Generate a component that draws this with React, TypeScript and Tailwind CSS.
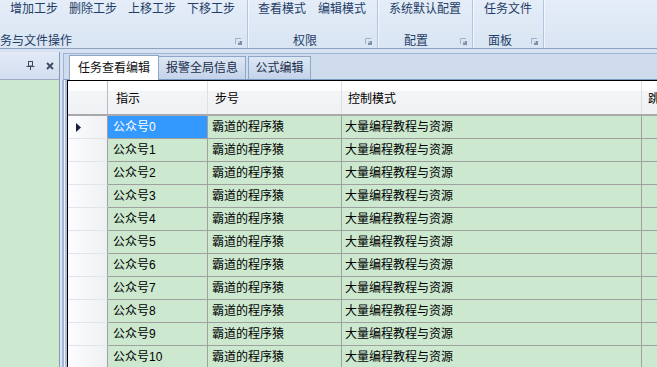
import React from "react";

const Launcher = () => (
  <svg width="7" height="7" viewBox="0 0 7 7" className="shrink-0 block">
    <path d="M0.5 6V0.5H6" fill="none" stroke="#9fb0c8" strokeWidth="1" />
    <rect x="3" y="3" width="4" height="4" fill="#7f90aa" />
    <rect x="3" y="3" width="2" height="2" fill="#b9c6d8" />
  </svg>
);

const Pin = () => (
  <svg width="9" height="9" viewBox="0 0 9 9" className="block">
    <rect x="2.5" y="0.5" width="4" height="4.5" fill="none" stroke="#3a4a60" />
    <path d="M0.5 5.5H8.5" stroke="#3a4a60" />
    <path d="M4.5 5.5V9" stroke="#3a4a60" />
  </svg>
);

const CloseX = () => (
  <svg width="8" height="8" viewBox="0 0 8 8" className="block">
    <path d="M1 1L7 7M7 1L1 7" stroke="#3a4a60" strokeWidth="1.8" />
  </svg>
);

const Arrow = () => (
  <svg width="6" height="9" viewBox="0 0 6 9" className="block">
    <polygon points="0,0 5,4.5 0,9" fill="#1c1c3c" />
  </svg>
);

export default function App() {
  const rows = Array.from({ length: 11 }, (_, i) => i);
  return (
    <div className="w-[657px] h-[367px] overflow-hidden flex flex-col bg-[#d6e2f1] font-['Liberation_Sans','Noto_Sans_CJK_SC',sans-serif] text-[12px]">
      {/* Ribbon */}
      <div className="flex h-[49px] shrink-0 border-b border-[#8da2bf] bg-gradient-to-b from-[#e4edf8] to-[#d9e5f3] leading-[14px] text-[#1f3d66]">
        <div className="w-[248px] h-[48px] flex flex-col border-r border-[#b3c5dc] overflow-hidden">
          <div className="flex pt-[2px] pl-[10px] gap-[11px] whitespace-nowrap">
            <span>增加工步</span>
            <span>删除工步</span>
            <span>上移工步</span>
            <span>下移工步</span>
          </div>
          <div className="mt-auto h-[14px] flex items-center">
            <span className="ml-[-12px] whitespace-nowrap">任务与文件操作</span>
            <span className="ml-auto mr-[5px]">
              <Launcher />
            </span>
          </div>
        </div>
        <div className="w-[130px] h-[48px] flex flex-col border-l border-white/60 border-r border-r-[#b3c5dc]">
          <div className="flex pt-[2px] pl-[9px] gap-[12px] whitespace-nowrap">
            <span>查看模式</span>
            <span>编辑模式</span>
          </div>
          <div className="mt-auto h-[14px] flex items-center">
            <span className="ml-[44px] whitespace-nowrap">权限</span>
            <span className="ml-auto mr-[5px]">
              <Launcher />
            </span>
          </div>
        </div>
        <div className="w-[95px] h-[48px] flex flex-col border-l border-white/60 border-r border-r-[#b3c5dc]">
          <div className="flex pt-[2px] pl-[10px] whitespace-nowrap">
            <span>系统默认配置</span>
          </div>
          <div className="mt-auto h-[14px] flex items-center">
            <span className="ml-[25px] whitespace-nowrap">配置</span>
            <span className="ml-auto mr-[5px]">
              <Launcher />
            </span>
          </div>
        </div>
        <div className="w-[71px] h-[48px] flex flex-col border-l border-white/60 border-r border-r-[#b3c5dc]">
          <div className="flex pt-[2px] pl-[10px] whitespace-nowrap">
            <span>任务文件</span>
          </div>
          <div className="mt-auto h-[14px] flex items-center">
            <span className="ml-[14px] whitespace-nowrap">面板</span>
            <span className="ml-auto mr-[5px]">
              <Launcher />
            </span>
          </div>
        </div>
        <div className="flex-1 border-l border-white/60" />
      </div>

      {/* Main */}
      <div className="flex flex-1 min-h-0">
        {/* Left panel */}
        <div className="w-[60px] shrink-0 mt-[3px] flex flex-col border-r border-[#8699b4]">
          <div className="h-[28px] shrink-0 flex items-center justify-end gap-[11px] pr-[5px] border-b border-[#9aabc2] bg-gradient-to-b from-[#e2eaf6] to-[#d2deef]">
            <Pin />
            <CloseX />
          </div>
          <div className="flex-1 bg-[#cce8cf]" />
        </div>

        {/* Right tab control */}
        <div className="flex-1 min-w-0 flex flex-col">
          <div className="mt-[4px] ml-[3px] h-[27px] shrink-0 flex items-end pl-[5px] border-l border-t border-[#9fb4d2] border-b border-b-[#7b9ac6] bg-[#cfdcee]">
            <div className="w-[90px] h-[25px] mb-[-1px] relative z-10 flex items-center justify-center border border-b-0 border-[#8ea6c8] bg-white text-[#111]">
              任务查看编辑
            </div>
            <div className="w-[87px] h-[23px] flex items-center justify-center border border-b-0 border-l-0 border-[#8ea6c8] bg-gradient-to-b from-[#dde7f4] to-[#c3d3e9] text-[#1c2d48]">
              报警全局信息
            </div>
            <div className="w-[63px] h-[23px] ml-[2px] flex items-center justify-center border border-b-0 border-[#8ea6c8] bg-gradient-to-b from-[#dde7f4] to-[#c3d3e9] text-[#1c2d48]">
              公式编辑
            </div>
          </div>

          <div className="flex flex-1 min-h-0">
            {/* frame stripes */}
            <div className="w-[7px] shrink-0 flex">
              <div className="w-[2px] bg-[#d9e3f1]" />
              <div className="w-[2px] bg-[#a4b5da]" />
              <div className="w-[1px] bg-[#eef2f9]" />
              <div className="w-[2px] bg-[#aebfe0]" />
            </div>

            {/* Grid */}
            <div className="flex-1 min-w-0 flex flex-col border-l border-t border-black bg-white overflow-hidden text-black">
              {/* header */}
              <div className="flex h-[35px] shrink-0 border-b-2 border-[#a9a9a9] bg-[linear-gradient(to_bottom,#ffffff_0%,#ffffff_28%,#f4f5f7_30%,#eff1f4_100%)]">
                <div className="w-[40px] shrink-0 border-r border-[#b9bcc2]" />
                <div className="w-[100px] shrink-0 border-r border-[#dde1e6] flex items-center pl-[8px] pt-[3px]">指示</div>
                <div className="w-[134px] shrink-0 border-r border-[#dde1e6] flex items-center pl-[7px] pt-[3px]">步号</div>
                <div className="w-[300px] shrink-0 border-r border-[#dde1e6] flex items-center pl-[6px] pt-[3px]">控制模式</div>
                <div className="flex-1 flex items-center pl-[6px] pt-[3px] whitespace-nowrap">跳转</div>
              </div>
              {rows.map((i) => (
                <div key={i} className="flex h-[23px] shrink-0">
                  <div className="w-[40px] shrink-0 border-r border-r-[#a0a0a0] border-b border-b-[#e2e4e8] bg-gradient-to-r from-[#fdfdfe] to-[#eef0f3] flex items-center pl-[8px]">
                    {i === 0 ? <Arrow /> : null}
                  </div>
                  <div
                    className={
                      i === 0
                        ? "w-[100px] shrink-0 border-r border-b border-[#a0a0a0] bg-[#3399ff] text-white flex items-center pl-[5px]"
                        : "w-[100px] shrink-0 border-r border-b border-[#a0a0a0] bg-[#cce8cf] flex items-center pl-[5px]"
                    }
                  >
                    公众号{i}
                  </div>
                  <div className="w-[134px] shrink-0 border-r border-b border-[#a0a0a0] bg-[#cce8cf] flex items-center pl-[4px] whitespace-nowrap">
                    霸道的程序猿
                  </div>
                  <div className="w-[300px] shrink-0 border-r border-b border-[#a0a0a0] bg-[#cce8cf] flex items-center pl-[3px] whitespace-nowrap">
                    大量编程教程与资源
                  </div>
                  <div className="flex-1 border-b border-[#a0a0a0] bg-[#cce8cf]" />
                </div>
              ))}
            </div>
          </div>
        </div>
      </div>
    </div>
  );
}
